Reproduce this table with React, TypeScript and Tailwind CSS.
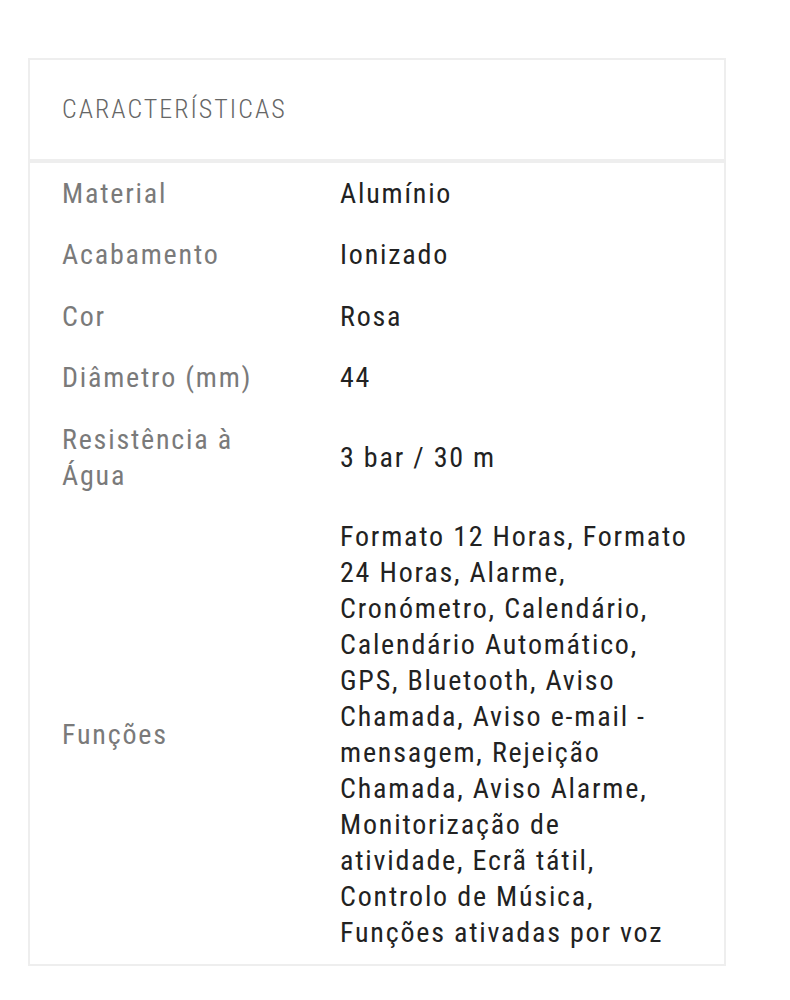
import React from 'react';

interface SpecRow {
  label: string;
  value: string;
}

const specs: SpecRow[] = [
  { label: 'Material', value: 'Alumínio' },
  { label: 'Acabamento', value: 'Ionizado' },
  { label: 'Cor', value: 'Rosa' },
  { label: 'Diâmetro (mm)', value: '44' },
  { label: 'Resistência à Água', value: '3 bar / 30 m' },
  {
    label: 'Funções',
    value:
      'Formato 12 Horas, Formato 24 Horas, Alarme, Cronómetro, Calendário, Calendário Automático, GPS, Bluetooth, Aviso Chamada, Aviso e-mail - mensagem, Rejeição Chamada, Aviso Alarme, Monitorização de atividade, Ecrã tátil, Controlo de Música, Funções ativadas por voz',
  },
];

export default function App() {
  return (
    <div className="min-h-screen bg-white pt-[58px] pl-[28px] font-['Roboto',sans-serif] font-stretch-condensed">
      <div className="w-[698px] border-2 border-[#eeeeee]">
        {/* Header */}
        <div className="h-[103px] flex items-center pl-[32px] border-b-4 border-[#eeeeee]">
          <h2 className="text-[26px] font-light tracking-[2px] text-[#666666] uppercase">Características</h2>
        </div>

        {/* Rows */}
        <div className="grid grid-cols-[310px_1fr]">
          {specs.map((row) => (
            <React.Fragment key={row.label}>
              <div className="flex items-center pl-[32px] pr-[40px] py-[12.75px] text-[28px] leading-[36px] tracking-[1.8px] text-[#7a7a7a]">
                {row.label}
              </div>
              <div className="flex items-center pr-[32px] py-[12.75px] text-[28px] leading-[36px] tracking-[1.8px] text-[#222222]">
                {row.value}
              </div>
            </React.Fragment>
          ))}
        </div>
      </div>
    </div>
  );
}
